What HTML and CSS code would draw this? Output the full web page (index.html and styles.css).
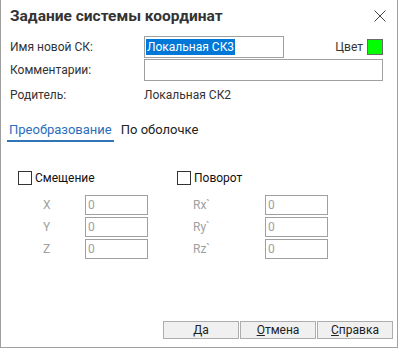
FILE: index.html
```html
<!DOCTYPE html>
<html lang="ru">
<head>
  <meta charset="UTF-8" />
  <title>Задание системы координат</title>
  <link rel="stylesheet" href="styles.css">
</head>
<body>

  <div class="dialog">
    <div class="titlebar">
      <h1>Задание системы координат</h1>
      <svg class="close" width="12" height="12" viewBox="0 0 12 12">
        <path d="M0.5 0.5 L11.5 11.5 M11.5 0.5 L0.5 11.5" stroke="#444" stroke-width="1" fill="none"/>
      </svg>
    </div>

    <div class="fields">
      <span class="label">Имя новой СК:</span>
      <div class="name-row">
        <div class="box name-box"><span class="selected">Локальная СК3</span></div>
        <span class="color-label">Цвет</span>
        <span class="swatch"></span>
      </div>
      <span class="label">Комментарии:</span>
      <div class="box"></div>
      <span class="label parent">Родитель:</span>
      <span class="label parent">Локальная СК2</span>
    </div>

    <div class="tabs">
      <span class="tab active">Преобразование</span>
      <span class="tab">По оболочке</span>
    </div>

    <div class="groups">
      <div class="group shift">
        <div class="check"><span class="checkbox"></span>Смещение</div>
        <div class="coords">
          <span>X</span><div class="box small">0</div>
          <span>Y</span><div class="box small">0</div>
          <span>Z</span><div class="box small">0</div>
        </div>
      </div>
      <div class="group rotate">
        <div class="check"><span class="checkbox"></span>Поворот</div>
        <div class="coords">
          <span>Rx`</span><div class="box small">0</div>
          <span>Ry`</span><div class="box small">0</div>
          <span>Rz`</span><div class="box small">0</div>
        </div>
      </div>
    </div>

    <div class="buttons">
      <button class="button">Да</button>
      <button class="button"><u>О</u>тмена</button>
      <button class="button"><u>С</u>правка</button>
    </div>
  </div>

</body>
</html>
```

FILE: styles.css
```css
* {
  margin: 0;
  padding: 0;
  box-sizing: border-box;
}

body {
  font-family: Roboto, 'Liberation Sans', sans-serif;
  font-size: 12px;
  color: #333;
  background: #fff;
}

.dialog {
  width: 398px;
  height: 348px;
  border: 1px solid #a0a0a0;
  border-top: none;
  display: flex;
  flex-direction: column;
  background: #fff;
}

.titlebar {
  display: flex;
  align-items: center;
  justify-content: space-between;
  height: 31px;
  padding: 0 11px 0 9px;
}

.titlebar h1 {
  font-size: 15.5px;
  font-weight: bold;
  color: #333;
}

.close {
  display: block;
}

.fields {
  display: grid;
  grid-template-columns: 134px 1fr;
  grid-auto-rows: 22px;
  row-gap: 1px;
  align-items: center;
  padding: 5px 14px 0 9px;
}

.label {
  line-height: 22px;
}

.parent {
  margin-top: 3px;
}

.name-row {
  display: flex;
  align-items: center;
  height: 22px;
}

.box {
  height: 22px;
  border: 1px solid #a0a0a0;
  background: #fff;
}

.name-box {
  width: 140px;
  padding: 2px 1px;
  line-height: 16px;
}

.selected {
  background: #0078d7;
  color: #fff;
  display: inline-block;
  padding: 0 1px;
  line-height: 16px;
}

.color-label {
  margin-left: auto;
  margin-right: 4px;
}

.swatch {
  width: 16px;
  height: 16px;
  border: 1px solid #6a6a6a;
  background: #00ff00;
}

.tabs {
  display: flex;
  gap: 5px;
  padding: 18px 0 0 6px;
  font-size: 13px;
}

.tab {
  padding: 0 2px 3px;
  color: #222;
  border-bottom: 2px solid transparent;
}

.tab.active {
  color: #2a6ebb;
  border-bottom-color: #2f75b5;
}

.groups {
  display: flex;
  padding: 28px 0 0 17px;
}

.group {
  display: flex;
  flex-direction: column;
}

.group.shift {
  width: 159px;
}

.check {
  display: flex;
  align-items: center;
  gap: 3px;
  color: #111;
  height: 16px;
}

.checkbox {
  width: 14px;
  height: 14px;
  border: 1px solid #333;
  background: #fff;
}

.coords {
  display: grid;
  row-gap: 2px;
  grid-auto-rows: 20px;
  align-items: center;
  margin-top: 9px;
  color: #a0a0a0;
}

.shift .coords {
  grid-template-columns: 42px 63px;
  padding-left: 25px;
}

.rotate .coords {
  grid-template-columns: 72px 63px;
  padding-left: 16px;
}

.box.small {
  height: 20px;
  padding: 1px 2px;
  line-height: 16px;
  color: #a0a0a0;
}

.buttons {
  display: flex;
  justify-content: flex-end;
  gap: 1px;
  margin-top: auto;
  padding: 0 4px 8px 0;
}

.button {
  width: 76px;
  height: 18px;
  font-family: inherit;
  font-size: 12px;
  color: #222;
  background: #f0f0f0;
  border: 1px solid #adadad;
}

.button u {
  text-decoration: underline;
}
```
